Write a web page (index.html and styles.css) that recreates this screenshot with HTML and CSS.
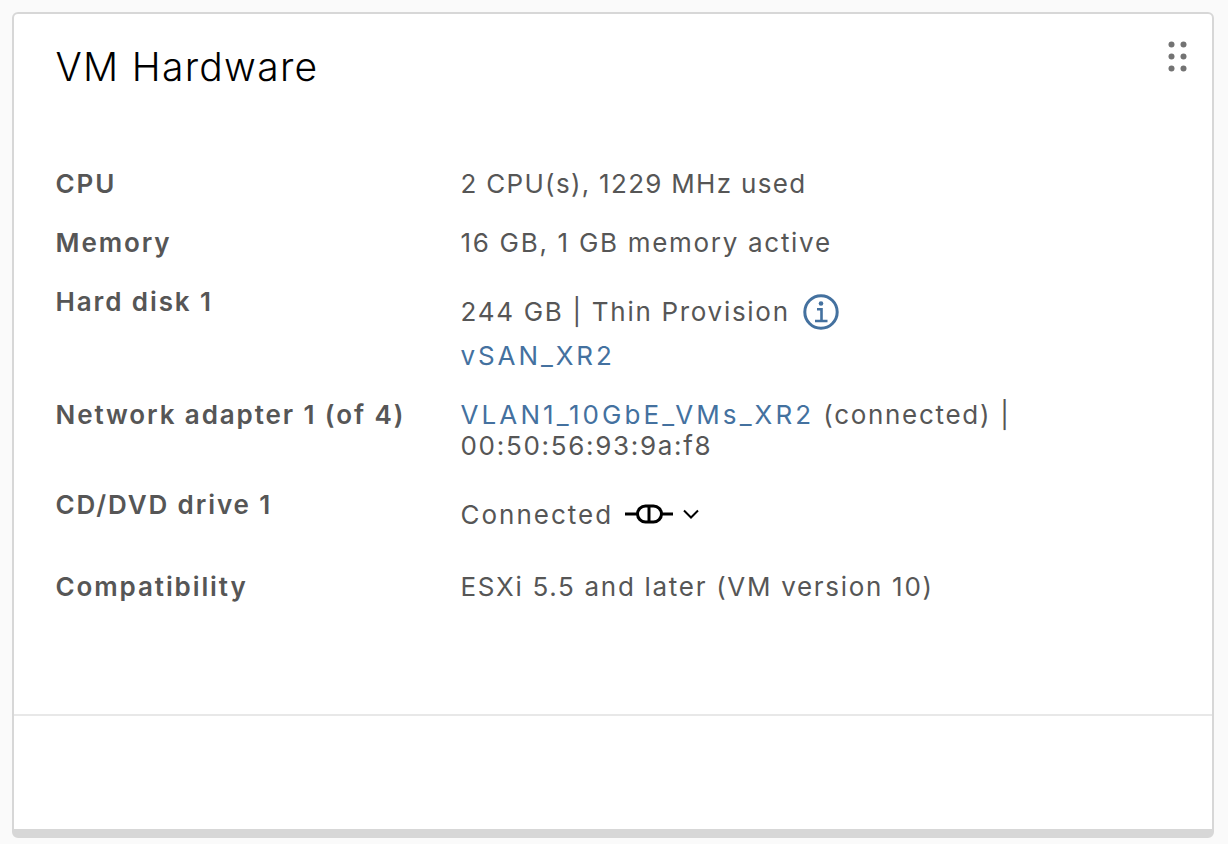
FILE: index.html
```html
<!DOCTYPE html>
<html lang="en">
<head>
  <meta charset="UTF-8">
  <title>VM Hardware</title>
  <link rel="stylesheet" href="styles.css">
</head>
<body>
  <div class="card">
    <div class="card-top">
      <div class="card-head">
        <h1 class="title">VM Hardware</h1>
        <svg class="grip" width="20" height="32" viewBox="0 0 20 32">
          <circle cx="3.5" cy="3.5" r="3" />
          <circle cx="15.5" cy="3.5" r="3" />
          <circle cx="3.5" cy="15.5" r="3" />
          <circle cx="15.5" cy="15.5" r="3" />
          <circle cx="3.5" cy="27.5" r="3" />
          <circle cx="15.5" cy="27.5" r="3" />
        </svg>
      </div>
      <div class="rows">
        <div class="row">
          <div class="label">CPU</div>
          <div class="value tight">2 CPU(s), 1229 MHz used</div>
        </div>
        <div class="row">
          <div class="label">Memory</div>
          <div class="value">16 GB, 1 GB memory active</div>
        </div>
        <div class="row">
          <div class="label">Hard disk 1</div>
          <div class="value value-tall">
            <div class="line">
              244 GB | Thin Provision
              <svg class="info" width="36" height="36" viewBox="0 0 36 36">
                <circle cx="18" cy="18" r="16.200" fill="none" stroke="#44719f" stroke-width="3" />
                <circle cx="18" cy="9.500" r="2.300" fill="#44719f" />
                <path d="M14 15.200h4.500v12M12 27h12.500" fill="none" stroke="#44719f" stroke-width="2.600" />
              </svg>
            </div>
            <div><a href="#">vSAN_XR2</a></div>
          </div>
        </div>
        <div class="row">
          <div class="label">Network adapter 1 (of 4)</div>
          <div class="value"><a href="#" class="wide">VLAN1_10GbE_VMs_XR2</a> (connected) |<br>00:50:56:93:9a:f8</div>
        </div>
        <div class="row">
          <div class="label">CD/DVD drive 1</div>
          <div class="value value-tall value-drive">
            <div class="line">
              Connected
              <svg class="plug" width="48" height="20" viewBox="0 0 48 20">
                <path d="M0 10h12M36 10h12" fill="none" stroke="#000" stroke-width="3" />
                <rect x="12.500" y="2" width="24" height="16" rx="8" fill="none" stroke="#000" stroke-width="3" />
                <path d="M24 3v14" fill="none" stroke="#000" stroke-width="3" />
              </svg>
              <svg class="caret" width="16" height="10" viewBox="0 0 16 10">
                <path d="M1 1.500l7 7 7-7" fill="none" stroke="#000" stroke-width="2" />
              </svg>
            </div>
          </div>
        </div>
        <div class="row">
          <div class="label">Compatibility</div>
          <div class="value">ESXi 5.5 and later (VM version 10)</div>
        </div>
      </div>
    </div>
    <div class="card-foot"></div>
  </div>
</body>
</html>
```

FILE: styles.css
```css
html, body {
  height: 100%;
}
body {
  margin: 0;
  padding: 12px 14px 6px 12px;
  box-sizing: border-box;
  background: #fafafa;
  font-family: "Inter", "Liberation Sans", sans-serif;
  color: #565656;
}
.card {
  height: 100%;
  box-sizing: border-box;
  background: #fff;
  border: 2px solid #d7d7d7;
  border-bottom-width: 9px;
  border-radius: 6px;
  display: flex;
  flex-direction: column;
}
.card-top {
  height: 702px;
  box-sizing: border-box;
  padding: 0 24px 0 41.5px;
  border-bottom: 2px solid #e8e8e8;
}
.card-head {
  display: flex;
  justify-content: space-between;
  align-items: flex-start;
  padding-top: 30px;
  height: 154px;
  box-sizing: border-box;
}
.title {
  margin: 0;
  font-size: 39px;
  line-height: 46px;
  font-weight: 300;
  letter-spacing: 1.3px;
  color: #000;
}
.grip {
  fill: #737373;
  margin-top: -3px;
}
.rows {
  display: flex;
  flex-direction: column;
  gap: 28px;
}
.row {
  display: grid;
  grid-template-columns: 405px 1fr;
  font-size: 26px;
  line-height: 31px;
}
.label {
  font-weight: 600;
  letter-spacing: 1.9px;
}
.value {
  letter-spacing: 1.7px;
}
.tight {
  letter-spacing: 1.3px;
}
.value-tall {
  display: flex;
  flex-direction: column;
  gap: 6px;
  padding-top: 3.5px;
}
.value-drive {
  padding-bottom: 6.5px;
  letter-spacing: 2px;
}
.line {
  height: 44px;
  display: flex;
  align-items: center;
  gap: 12px;
}
.value a {
  color: #44719f;
  text-decoration: none;
  letter-spacing: 2.9px;
}
.value .wide {
  letter-spacing: 3.1px;
}
.info {
  margin-left: 1.5px;
}
.caret {
  margin-left: -2px;
}
```
